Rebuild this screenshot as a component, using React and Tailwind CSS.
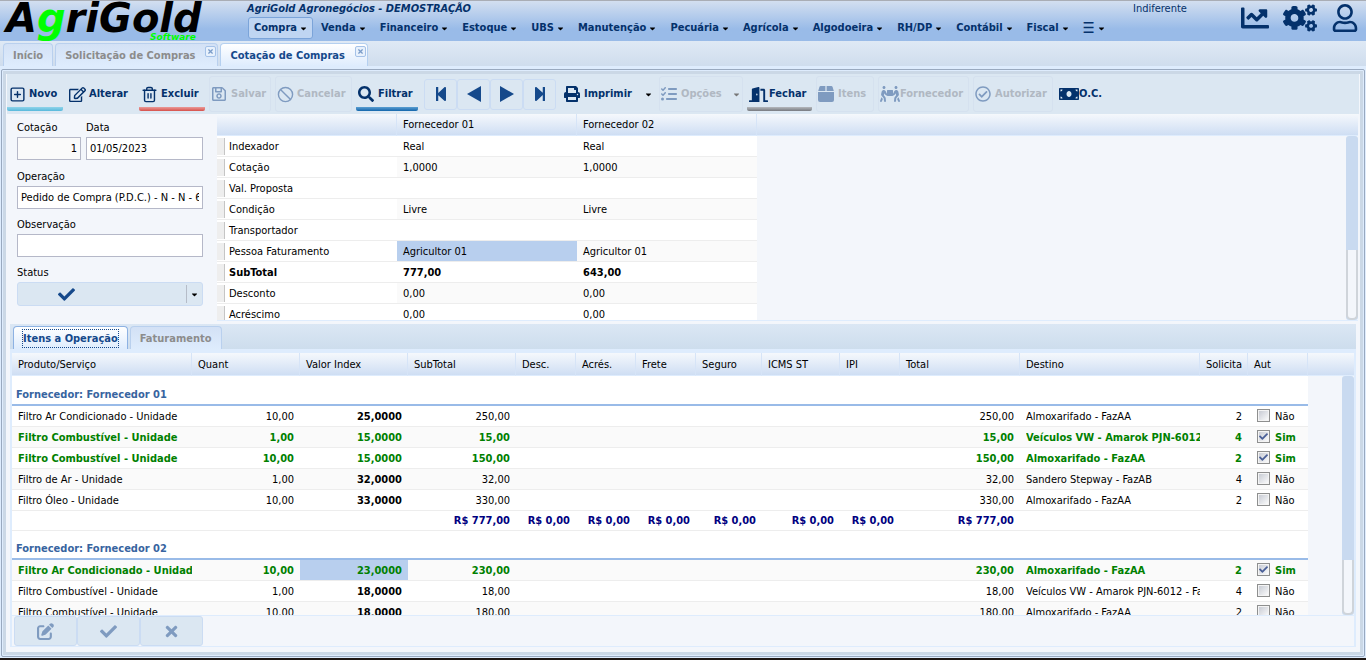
import clsx from 'clsx';
import {
  FaCaretDown,
  FaChartLine,
  FaCheck,
  FaCogs,
  FaDoorOpen,
  FaMoneyBill,
  FaPeopleCarry,
  FaPrint,
  FaRegCheckCircle,
  FaRegEdit,
  FaRegSave,
  FaRegUser,
  FaSearch,
  FaStepBackward,
  FaStepForward,
  FaTimes,
} from 'react-icons/fa';
import { FaListCheck, FaPenToSquare } from 'react-icons/fa6';
import { Ban, SquarePlus, Trash2 } from 'lucide-react';

const MENUS = [
  'Compra',
  'Venda',
  'Financeiro',
  'Estoque',
  'UBS',
  'Manutenção',
  'Pecuária',
  'Agrícola',
  'Algodoeira',
  'RH/DP',
  'Contábil',
  'Fiscal',
  '☰',
];

const QUOTE_ROWS = [
  { label: 'Indexador', values: ['Real', 'Real'] },
  { label: 'Cotação', values: ['1,0000', '1,0000'] },
  { label: 'Val. Proposta', values: ['', ''] },
  { label: 'Condição', values: ['Livre', 'Livre'] },
  { label: 'Transportador', values: ['', ''] },
  { label: 'Pessoa Faturamento', values: ['Agricultor 01', 'Agricultor 01'], selected: 0 },
  { label: 'SubTotal', values: ['777,00', '643,00'], bold: true },
  { label: 'Desconto', values: ['0,00', '0,00'] },
  { label: 'Acréscimo', values: ['0,00', '0,00'] },
];

const COLUMNS = [
  { title: 'Produto/Serviço', width: 'w-[180px]' },
  { title: 'Quant', width: 'w-[108px]' },
  { title: 'Valor Index', width: 'w-[108px]' },
  { title: 'SubTotal', width: 'w-[108px]' },
  { title: 'Desc.', width: 'w-[60px]' },
  { title: 'Acrés.', width: 'w-[60px]' },
  { title: 'Frete', width: 'w-[60px]' },
  { title: 'Seguro', width: 'w-[66px]' },
  { title: 'ICMS ST', width: 'w-[78px]' },
  { title: 'IPI', width: 'w-[60px]' },
  { title: 'Total', width: 'w-[120px]' },
  { title: 'Destino', width: 'w-[180px]' },
  { title: 'Solicita', width: 'w-[48px]' },
  { title: 'Aut', width: 'w-[60px]' },
];

const GROUPS = [
  {
    name: 'Fornecedor 01',
    items: [
      { product: 'Filtro Ar Condicionado - Unidade', qty: '10,00', price: '25,0000', total: '250,00', dest: 'Almoxarifado - FazAA', req: 2 },
      { product: 'Filtro Combustível - Unidade', qty: '1,00', price: '15,0000', total: '15,00', dest: 'Veículos VW - Amarok PJN-6012 - FazAA', req: 4, approved: true },
      { product: 'Filtro Combustível - Unidade', qty: '10,00', price: '15,0000', total: '150,00', dest: 'Almoxarifado - FazAA', req: 2, approved: true },
      { product: 'Filtro de Ar - Unidade', qty: '1,00', price: '32,0000', total: '32,00', dest: 'Sandero Stepway - FazAB', req: 4 },
      { product: 'Filtro Óleo - Unidade', qty: '10,00', price: '33,0000', total: '330,00', dest: 'Almoxarifado - FazAA', req: 2 },
    ],
    summary: ['R$ 777,00', 'R$ 0,00', 'R$ 0,00', 'R$ 0,00', 'R$ 0,00', 'R$ 0,00', 'R$ 0,00', 'R$ 777,00'],
  },
  {
    name: 'Fornecedor 02',
    items: [
      { product: 'Filtro Ar Condicionado - Unidade', qty: '10,00', price: '23,0000', total: '230,00', dest: 'Almoxarifado - FazAA', req: 2, approved: true, selected: true },
      { product: 'Filtro Combustível - Unidade', qty: '1,00', price: '18,0000', total: '18,00', dest: 'Veículos VW - Amarok PJN-6012 - FazAA', req: 4 },
      { product: 'Filtro Combustível - Unidade', qty: '10,00', price: '18,0000', total: '180,00', dest: 'Almoxarifado - FazAA', req: 2 },
    ],
  },
];

const Logo = () => (
  <svg viewBox="0 0 240 40" className="h-[40px] w-[240px] shrink-0" role="img" aria-label="AgriGold Software">
    <g fontFamily="DejaVu Sans" fontWeight="700" fontStyle="italic">
      <text x="6" y="31" fontSize="40" fill="#000">
        A<tspan fill="#00ff00">g</tspan>riGold
      </text>
      <text x="150" y="39" fontSize="9" fill="#00ff00">
        Software
      </text>
    </g>
  </svg>
);

const Header = () => (
  <header className="flex h-[41px] shrink-0 border-t border-[#a9adb5] bg-gradient-to-b from-[#d3dff0] to-[#99bbe8] to-70% text-[#04316b]">
    <Logo />
    <div className="min-w-0 flex-1">
      <div className="flex h-4 items-center pl-[7px]">
        <h1 className="font-bold italic">AgriGold Agronegócios - DEMOSTRAÇÃO</h1>
      </div>
      <nav className="flex gap-[2px] pl-2">
        {MENUS.map((menu, i) => (
          <button
            key={menu}
            className={clsx(
              'flex h-[22px] items-center gap-[3px] rounded-[3px] border px-[5px] font-bold',
              i === 0 ? 'border-[#7ba4d9] bg-[#bfd5f2]' : 'border-transparent'
            )}
          >
            <span className={clsx(menu === '☰' && 'text-[15px]')}>{menu}</span>
            <FaCaretDown className="h-[9px] w-[7px] text-black" />
          </button>
        ))}
      </nav>
    </div>
    <span className="w-[108px] pt-px leading-[14px]">Indiferente</span>
    <div className="flex items-center gap-[14px] pr-[7px] pb-[6px]">
      <button aria-label="Indicadores">
        <FaChartLine className="size-7" />
      </button>
      <button aria-label="Configurações">
        <FaCogs className="size-[34px]" />
      </button>
      <button aria-label="Usuário">
        <FaRegUser className="size-7" />
      </button>
    </div>
  </header>
);

const PageTab = ({ title, active, closable }) => (
  <div
    className={clsx(
      'flex h-full rounded-t-[4px] border border-b-0 bg-gradient-to-b font-bold',
      active
        ? 'border-[#b5d0f0] from-white to-[#deecfd] text-[#15498b]'
        : 'border-[#b9d0ee] from-[#d3e1f5] to-[#deecfd] text-[#8c8c8c]'
    )}
  >
    <button className={clsx('pt-[2px] pl-[9px]', closable ? 'pr-[10px]' : 'pr-[9px]')}>{title}</button>
    {closable && (
      <button
        aria-label={`Fechar ${title}`}
        className="mt-[2px] mr-px flex size-[11px] items-center justify-center rounded-[2px] border border-[#a5c2e8] bg-[#e8f1fc] text-[#7a9cc9]"
      >
        <FaTimes className="size-[7px]" />
      </button>
    )}
  </div>
);

const ToolButton = ({ icon: Icon, label, width, iconClass = 'size-4', gap = 'gap-1', line, disabled, menu }) => (
  <button
    disabled={disabled}
    className={clsx(
      'relative flex h-9 shrink-0 items-center rounded-[3px] border px-px font-bold whitespace-nowrap',
      width,
      gap,
      disabled ? 'border-[#d5e1ef] text-[#b0b8c2]' : 'border-transparent text-[#04316b]'
    )}
  >
    <Icon className={clsx('shrink-0', iconClass, disabled && 'text-[#7f9bc0]')} />
    {label}
    {menu && <FaCaretDown className={clsx('ml-auto size-[9px]', disabled ? 'text-[#777]' : 'text-black')} />}
    {line && <span className={clsx('absolute -inset-x-px bottom-0 h-1 rounded-b-[2px] bg-gradient-to-b', line)} />}
  </button>
);

const PlayIcon = ({ className }) => (
  <svg viewBox="0 0 14 16" className={className} fill="currentColor">
    <path d="M0 0 L14 8 L0 16 Z" />
  </svg>
);

const BoxIcon = ({ className }) => (
  <svg viewBox="0 0 16 16" className={className} fill="currentColor">
    <path d="M2.6 0 H7.4 V5 H0.2 L1.4 1 Q1.8 0 2.6 0 Z" />
    <path d="M8.6 0 H13.4 Q14.2 0 14.6 1 L15.8 5 H8.6 Z" />
    <path d="M0 6 H16 V14 Q16 16 14 16 H2 Q0 16 0 14 Z" />
  </svg>
);

const NavButton = ({ label, children }) => (
  <button
    aria-label={label}
    className="flex h-[31px] w-[33px] items-center justify-center rounded-[3px] border border-[#cbdcf3] text-[#15498b]"
  >
    {children}
  </button>
);

const Toolbar = () => (
  <div className="flex h-10 items-center gap-1 overflow-hidden bg-[#dbe7f2]">
    <ToolButton icon={SquarePlus} label="Novo" width="w-[56px]" iconClass="size-[17px]" gap="gap-[3px]" line="from-[#8fd3ea] to-[#56b9dc]" />
    <ToolButton icon={FaRegEdit} label="Alterar" width="w-[68px]" iconClass="size-[17px]" gap="gap-[3px]" />
    <ToolButton icon={Trash2} label="Excluir" width="w-[66px]" iconClass="size-[17px]" gap="gap-[3px]" line="from-[#e99a98] to-[#d64f4b]" />
    <ToolButton icon={FaRegSave} label="Salvar" width="w-[62px]" disabled />
    <ToolButton icon={Ban} label="Cancelar" width="w-[77px]" iconClass="size-[17px]" gap="gap-[3px]" disabled />
    <ToolButton icon={FaSearch} label="Filtrar" width="w-[62px]" line="from-[#5a9fd2] to-[#0f66ab]" />
    <div className="mx-[2px] flex">
      <NavButton label="Primeiro">
        <FaStepBackward className="size-4" />
      </NavButton>
      <NavButton label="Anterior">
        <PlayIcon className="h-4 w-[14px] rotate-180" />
      </NavButton>
      <NavButton label="Próximo">
        <PlayIcon className="h-4 w-[14px]" />
      </NavButton>
      <NavButton label="Último">
        <FaStepForward className="size-4" />
      </NavButton>
    </div>
    <ToolButton icon={FaPrint} label="Imprimir" width="w-[93px]" menu />
    <ToolButton icon={FaListCheck} label="Opções" width="w-[84px]" disabled menu />
    <ToolButton icon={FaDoorOpen} label="Fechar" width="w-[65px]" iconClass="size-[19px]" gap="gap-px" line="from-[#b5b8bd] to-[#777a80]" />
    <ToolButton icon={BoxIcon} label="Itens" width="w-[58px]" disabled />
    <ToolButton icon={FaPeopleCarry} label="Fornecedor" width="w-[91px]" iconClass="size-5" gap="gap-0" disabled />
    <ToolButton icon={FaRegCheckCircle} label="Autorizar" width="w-[80px]" disabled />
    <ToolButton icon={FaMoneyBill} label="O.C." width="w-[50px]" iconClass="size-5" gap="gap-0" />
  </div>
);

const inputClass = 'h-[23px] w-full border border-[#b5b8c8] px-[3px] outline-none';

const QuoteForm = () => (
  <form className="w-[210px] shrink-0 pt-[5px] pr-[14px] pl-[10px]" onSubmit={(e) => e.preventDefault()}>
    <div className="flex gap-[5px]">
      <label className="w-16">
        <span className="block h-[18px] leading-[18px]">Cotação</span>
        <input className={clsx(inputClass, 'bg-[#fafafa] text-right')} defaultValue="1" />
      </label>
      <label className="flex-1">
        <span className="block h-[18px] leading-[18px]">Data</span>
        <input className={clsx(inputClass, 'bg-white')} defaultValue="01/05/2023" />
      </label>
    </div>
    <label className="mt-2 block">
      <span className="block h-[18px] leading-[18px]">Operação</span>
      <input className={clsx(inputClass, 'bg-white')} defaultValue="Pedido de Compra (P.D.C.) - N - N - 6" />
    </label>
    <label className="mt-[7px] block">
      <span className="block h-[18px] leading-[18px]">Observação</span>
      <input className={clsx(inputClass, 'bg-white')} defaultValue="" />
    </label>
    <div className="mt-[7px]">
      <span id="status-label" className="block h-[18px] leading-[18px]">
        Status
      </span>
      <button
        type="button"
        aria-labelledby="status-label"
        className="flex h-6 w-full items-center rounded-[3px] border border-[#cbdcf3] bg-[#dbe7f2]"
      >
        <span className="flex-1 pl-10 text-[#15498b]">
          <FaCheck className="size-[17px]" />
        </span>
        <span className="flex h-[18px] w-4 items-center justify-center border-l border-[#b5bcc8]">
          <FaCaretDown className="size-[9px] text-black" />
        </span>
      </button>
    </div>
  </form>
);

const headCell = 'border-r border-b border-[#d6e4f7] border-b-[#deecfd] px-[6px] pb-0 text-left font-normal';

const ScrollBar = ({ className, trackClass, thumbClass }) => (
  <div className={clsx('absolute right-0 bottom-0 flex w-3 flex-col overflow-hidden rounded-[3px] bg-[#c9daf0]', className)}>
    <div className={trackClass} />
    <div className={clsx('rounded-b-[5px] border-2 border-t-0 border-[#cfd4da] bg-[#f3f6fb]', thumbClass)} />
  </div>
);

const QuoteGrid = () => (
  <div className="relative mr-px min-w-0 flex-1 overflow-hidden border-b border-[#deecfd]">
    <table className="w-full table-fixed border-separate border-spacing-0">
      <thead>
        <tr className="h-[22px] bg-gradient-to-b from-[#f5f8fc] to-[#cdddf3]">
          <th className={clsx(headCell, 'w-[180px]')} />
          <th className={clsx(headCell, 'w-[180px] pt-0')}>Fornecedor 01</th>
          <th className={clsx(headCell, 'w-[180px] pt-0')}>Fornecedor 02</th>
          <th className="border-b border-[#deecfd]" />
        </tr>
      </thead>
      <tbody>
        {QUOTE_ROWS.map((row, r) => (
          <tr key={row.label} className={clsx('h-[21px]', row.bold && 'font-bold')}>
            <th scope="row" className={clsx('border-b border-[#ededed] bg-white p-0 text-left', row.bold ? 'font-bold' : 'font-normal')}>
              <div className="flex items-end">
                <span className="mr-1 h-[17px] w-2 border-r border-[#c5c5c5] bg-[#eeeeee]" />
                {row.label}
              </div>
            </th>
            {row.values.map((value, i) => (
              <td
                key={i}
                className={clsx(
                  'border-b border-[#ededed] px-[6px] pt-px',
                  row.selected === i ? 'bg-[#b8cfee]' : r % 2 ? 'bg-[#fafafa]' : 'bg-white'
                )}
              >
                {value}
              </td>
            ))}
            <td />
          </tr>
        ))}
      </tbody>
    </table>
    <ScrollBar className="top-[22px]" trackClass="flex-[5]" thumbClass="flex-[3]" />
  </div>
);

const ItemRow = ({ item, striped }) => {
  const cell = clsx(
    'overflow-hidden border-b border-[#ededed] px-[6px] pt-px whitespace-nowrap',
    striped ? 'bg-[#fafafa]' : 'bg-white'
  );
  return (
    <tr className={clsx('h-[21px]', item.approved && 'font-bold text-[#008000]')}>
      <td className={clsx(cell, 'pr-0')}>
        <div className="overflow-hidden">{item.product}</div>
      </td>
      <td className={clsx(cell, 'text-right')}>{item.qty}</td>
      <td className={clsx(cell, 'text-right font-bold', item.selected && 'bg-[#b8cfee]!')}>{item.price}</td>
      <td className={clsx(cell, 'text-right')}>{item.total}</td>
      <td className={cell} />
      <td className={cell} />
      <td className={cell} />
      <td className={cell} />
      <td className={cell} />
      <td className={cell} />
      <td className={clsx(cell, 'text-right')}>{item.total}</td>
      <td className={clsx(cell, 'pr-0')}>
        <div className="overflow-hidden">{item.dest}</div>
      </td>
      <td className={clsx(cell, 'text-right')}>{item.req}</td>
      <td className={cell}>
        <label className="flex items-start gap-[5px] pl-[3px]">
          <span className="relative flex size-[13px]">
            <input
              type="checkbox"
              defaultChecked={item.approved}
              className="peer size-[13px] appearance-none border border-[#8e8f8f] bg-gradient-to-br from-[#c3c7d0] to-white shadow-[inset_0_0_0_1px_#f4f4f4]"
            />
            <FaCheck className="pointer-events-none absolute top-[2px] left-[2px] hidden size-[9px] text-[#4a5f97] peer-checked:block" />
          </span>
          {item.approved ? 'Sim' : 'Não'}
        </label>
      </td>
      <td />
    </tr>
  );
};

const ItemGroup = ({ group, first }) => (
  <tbody>
    <tr className={first ? 'h-[30px]' : 'h-[29px]'}>
      <th
        colSpan={14}
        scope="rowgroup"
        className="border-b-2 border-[#99bbe8] bg-white px-1 pb-px text-left align-bottom font-bold text-[#3764a0]"
      >
        Fornecedor: {group.name}
      </th>
      <td />
    </tr>
    {group.items.map((item, i) => (
      <ItemRow key={i} item={item} striped={first ? i % 2 === 1 : i % 2 === 0} />
    ))}
    {group.summary && (
      <tr className="h-5 text-right font-bold text-[#000080]">
        <td colSpan={3} className="border-b border-[#ededed] bg-white" />
        {group.summary.map((value, i) => (
          <td key={i} className="border-b border-[#ededed] bg-white px-[6px] whitespace-nowrap">
            {value}
          </td>
        ))}
        <td colSpan={3} className="border-b border-[#ededed] bg-white" />
        <td />
      </tr>
    )}
  </tbody>
);

const ItemsPanel = () => (
  <section className="mx-[3px] mt-[3px] mb-[5px] flex min-h-0 flex-1 flex-col bg-[#deecfd]">
    <div className="flex h-[25px] shrink-0 gap-[2px] bg-gradient-to-b from-[#dbe7f4] to-[#cddded] pt-[2px] pl-[3px]">
      <button className="rounded-t-[4px] border border-b-0 border-[#8db2e3] bg-gradient-to-b from-white to-[#deecfd] px-2 font-bold text-[#15498b]">
        <span className="block border border-dotted border-[#15498b] pt-px leading-4">Itens a Operação</span>
      </button>
      <button className="rounded-t-[4px] border border-b-0 border-[#b9d0ee] bg-gradient-to-b from-[#d3e1f5] to-[#deecfd] px-[9px] pt-px font-bold text-[#8c8c8c]">
        Faturamento
      </button>
    </div>
    <div className="relative mx-[2px] mt-1 min-h-0 flex-1 overflow-hidden bg-[#f3f6fb]">
      <table className="w-full table-fixed border-separate border-spacing-0">
        <thead>
          <tr className="h-[23px] bg-gradient-to-b from-[#f5f8fc] to-[#cdddf3]">
            {COLUMNS.map((col) => (
              <th key={col.title} className={clsx(headCell, 'pt-[2px]', col.width)}>
                {col.title}
              </th>
            ))}
            <th className="border-b border-[#deecfd]" />
          </tr>
        </thead>
        {GROUPS.map((group, i) => (
          <ItemGroup key={group.name} group={group} first={i === 0} />
        ))}
      </table>
      <ScrollBar className="top-[23px]" trackClass="flex-[7]" thumbClass="flex-[2]" />
    </div>
    <div className="m-px mx-[2px] flex h-[30px] shrink-0 bg-[#f3f6fb] pl-[2px]">
      {[
        { label: 'Editar', icon: FaPenToSquare },
        { label: 'Confirmar', icon: FaCheck },
        { label: 'Descartar', icon: FaTimes },
      ].map(({ label, icon: Icon }) => (
        <button
          key={label}
          aria-label={label}
          className="flex w-[63px] items-center justify-center rounded-[3px] border border-[#cbdcf3] bg-[#dbe7f2] text-[#7f9bc0]"
        >
          <Icon className="size-[17px]" />
        </button>
      ))}
    </div>
  </section>
);

export default function App() {
  return (
    <div className="flex h-screen flex-col overflow-hidden border-b-2 border-[#1f1714] bg-[#deecfd] font-['DejaVu_Sans_Condensed','DejaVu_Sans',sans-serif] text-[11px] leading-4 text-black">
      <Header />
      <div className="flex h-[25px] shrink-0 gap-[2px] bg-gradient-to-b from-[#dfe9f5] to-[#cfdded] pt-[2px] pl-[3px]">
        <PageTab title="Início" />
        <PageTab title="Solicitação de Compras" closable />
        <PageTab title="Cotação de Compras" closable active />
      </div>
      <main className="mx-px mt-[3px] mb-px flex min-h-0 flex-1 flex-col rounded-[2px] border border-[#99a9bf] p-px">
        <div className="flex min-h-0 flex-1 flex-col border-[3px] border-[#cbd8e6] bg-[#f3f6fb] px-px">
          <Toolbar />
          <div className="flex h-[207px] shrink-0">
            <QuoteForm />
            <QuoteGrid />
          </div>
          <ItemsPanel />
        </div>
      </main>
    </div>
  );
}
